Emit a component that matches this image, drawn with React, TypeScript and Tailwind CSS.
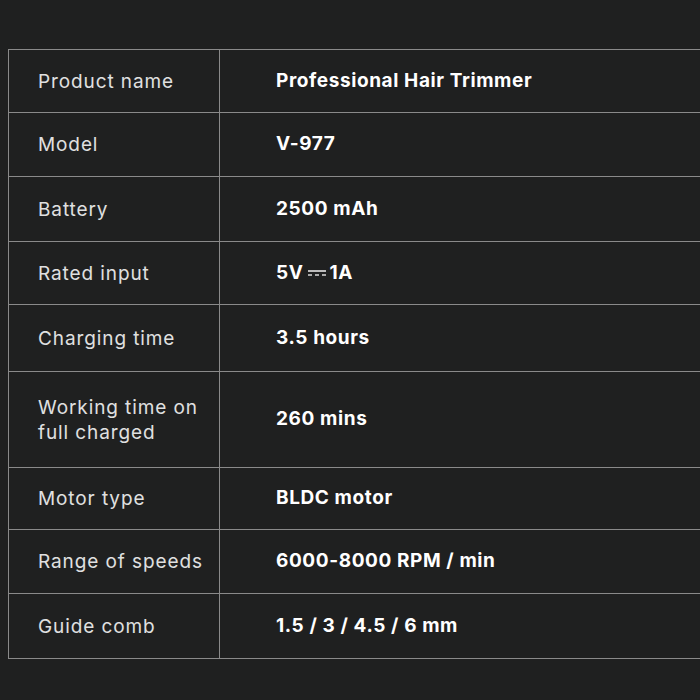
import React from 'react';

const specs = [
  { label: 'Product name', value: 'Professional Hair Trimmer', h: 'h-[63px]' },
  { label: 'Model', value: 'V-977', h: 'h-[64px]' },
  { label: 'Battery', value: '2500 mAh', h: 'h-[65px]' },
  { label: 'Rated input', value: 'dc', h: 'h-[63px]' },
  { label: 'Charging time', value: '3.5 hours', h: 'h-[67px]' },
  { label: 'Working time on full charged', value: '260 mins', h: 'h-[96px]' },
  { label: 'Motor type', value: 'BLDC motor', h: 'h-[62px]' },
  { label: 'Range of speeds', value: '6000-8000 RPM / min', h: 'h-[64px]' },
  { label: 'Guide comb', value: '1.5 / 3 / 4.5 / 6 mm', h: 'h-[65px]' },
];

const DcSymbol = () => (
  <svg width="18" height="10" viewBox="0 0 18 10" className="mx-[4px] inline-block">
    <line x1="0" y1="3" x2="18" y2="3" stroke="#e5e5e5" strokeWidth="1.6" />
    <line x1="0" y1="7" x2="4" y2="7" stroke="#e5e5e5" strokeWidth="1.4" />
    <line x1="7" y1="7" x2="11" y2="7" stroke="#e5e5e5" strokeWidth="1.4" />
    <line x1="14" y1="7" x2="18" y2="7" stroke="#e5e5e5" strokeWidth="1.4" />
  </svg>
);

export default function App() {
  return (
    <div className="h-[700px] w-[700px] overflow-hidden bg-[#1f2020] pt-[49px] pl-2" style={{ fontFamily: 'Inter, "Open Sans", sans-serif' }}>
      <div className="w-[720px] border-t border-l border-[#8a8a8a]">
        {specs.map((s) => (
          <div key={s.label} className={`flex border-b border-[#8a8a8a] ${s.h}`}>
            <div className="flex w-[211px] shrink-0 items-center border-r border-[#8a8a8a] pl-[29px] pr-2 text-[19px] leading-[25px] tracking-[0.9px] text-[#e0e0e0]">
              {s.label}
            </div>
            <div className="flex items-center pl-[56px] text-[19px] font-bold tracking-[0.6px] text-white">
              {s.value === 'dc' ? (
                <span className="flex items-center">5V<DcSymbol />1A</span>
              ) : (
                s.value
              )}
            </div>
          </div>
        ))}
      </div>
    </div>
  );
}
